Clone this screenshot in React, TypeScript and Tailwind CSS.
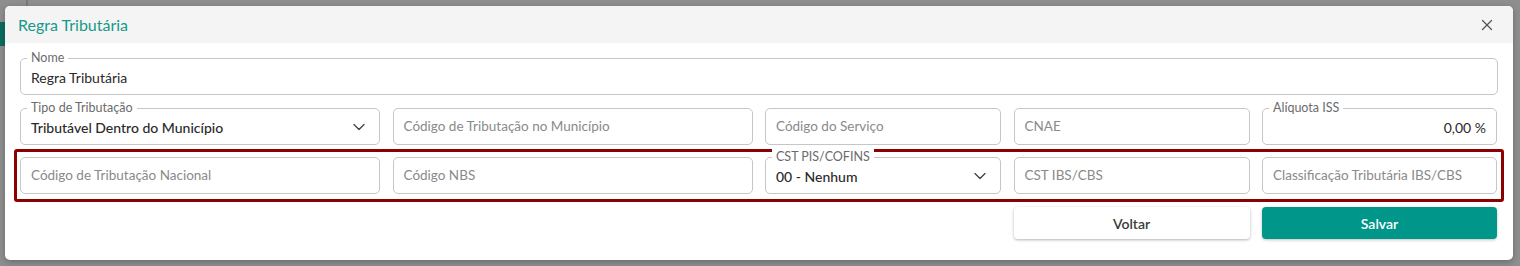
import { X, ChevronDown } from "lucide-react";

interface FieldProps {
  label?: string;
  value?: string;
  placeholder?: string;
  select?: boolean;
  alignRight?: boolean;
}

function Field({ label, value, placeholder, select, alignRight }: FieldProps) {
  return (
    <div className="relative h-[37px] rounded-[5px] border border-[#c6c6c6] bg-white">
      {label && (
        <span className="absolute -top-[9px] left-[6px] bg-white px-[4px] text-[12.5px] leading-[16px] text-[#6b6b6b]">
          {label}
        </span>
      )}
      <div className="flex h-full items-center pl-[10px] pr-[10px]">
        {value ? (
          <span
            className={`flex-1 pt-[1px] text-[14px] text-[#2a2a2a] ${alignRight ? "text-right" : ""} ${select ? "font-medium" : ""}`}
          >
            {value}
          </span>
        ) : (
          <span className="flex-1 text-[13.5px] text-[#8a8a8a]">{placeholder}</span>
        )}
        {select && <ChevronDown className="h-[20px] w-[20px] text-[#444]" strokeWidth={1.6} />}
      </div>
    </div>
  );
}

const cols = "grid grid-cols-[360px_360px_236px_236px_235px] gap-x-[12.5px]";

export default function App() {
  return (
    <div
      className="relative h-[266px] w-[1520px] overflow-hidden bg-[#8e8e8e]"
      style={{ fontFamily: "Lato, 'Noto Sans', sans-serif" }}
    >
      {/* backdrop bits */}
      <div className="absolute left-0 top-[22px] h-[24px] w-[6px] bg-[#0d6b5e]" />
      <div className="absolute left-[26px] top-0 h-[6px] w-[2px] bg-[#7a7a7a]" />

      <div className="absolute left-[5px] top-[6px] w-[1508px] overflow-hidden rounded-[5px] bg-white shadow-[0_2px_6px_rgba(0,0,0,0.25)]">
        {/* Header */}
        <div className="flex h-[37px] items-center justify-between bg-[#f4f4f4] pl-[13px] pr-[17px]">
          <span className="text-[16px] text-[#17998a]">Regra Tributária</span>
          <X className="h-[18px] w-[18px] text-[#555]" strokeWidth={1.7} />
        </div>

        {/* Body */}
        <div className="px-[15px] pb-[21px] pt-[15px]">
          <Field label="Nome" value="Regra Tributária" />

          <div className={`${cols} mt-[13px]`}>
            <Field label="Tipo de Tributação" value="Tributável Dentro do Município" select />
            <Field placeholder="Código de Tributação no Município" />
            <Field placeholder="Código do Serviço" />
            <Field placeholder="CNAE" />
            <Field label="Alíquota ISS" value="0,00 %" alignRight />
          </div>

          <div className="-mx-[6px] mt-[4px] rounded-[3px] border-[3px] border-[#8b0000] px-[3px] py-[5px]">
            <div className={cols}>
              <Field placeholder="Código de Tributação Nacional" />
              <Field placeholder="Código NBS" />
              <Field label="CST PIS/COFINS" value="00 - Nenhum" select />
              <Field placeholder="CST IBS/CBS" />
              <Field placeholder="Classificação Tributária IBS/CBS" />
            </div>
          </div>

          <div className={`${cols} mt-[5px]`}>
            <div className="col-start-4 flex h-[32px] items-center justify-center rounded-[4px] bg-white text-[14px] font-semibold text-[#3a3a3a] shadow-[0_1px_3px_rgba(0,0,0,0.3)]">
              Voltar
            </div>
            <div className="flex h-[32px] items-center justify-center rounded-[4px] bg-[#00968a] text-[14px] font-semibold text-white shadow-[0_1px_3px_rgba(0,0,0,0.25)]">
              Salvar
            </div>
          </div>
        </div>
      </div>
    </div>
  );
}
